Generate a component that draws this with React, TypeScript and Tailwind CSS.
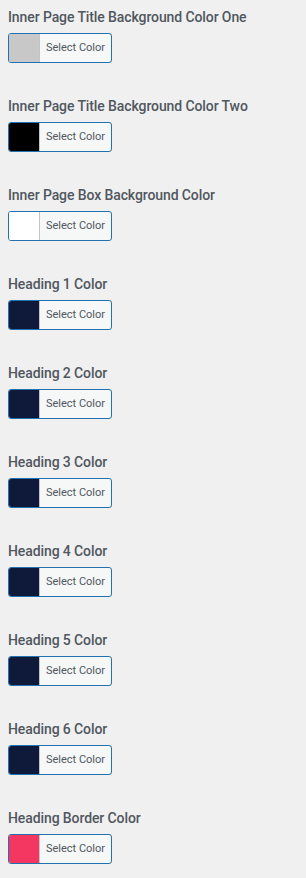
const fields = [
  { label: "Inner Page Title Background Color One", color: "bg-[#c8c8c8]" },
  { label: "Inner Page Title Background Color Two", color: "bg-[#000000]" },
  { label: "Inner Page Box Background Color", color: "bg-[#ffffff]" },
  { label: "Heading 1 Color", color: "bg-[#0f1a3a]" },
  { label: "Heading 2 Color", color: "bg-[#0f1a3a]" },
  { label: "Heading 3 Color", color: "bg-[#0f1a3a]" },
  { label: "Heading 4 Color", color: "bg-[#0f1a3a]" },
  { label: "Heading 5 Color", color: "bg-[#0f1a3a]" },
  { label: "Heading 6 Color", color: "bg-[#0f1a3a]" },
  { label: "Heading Border Color", color: "bg-[#f33760]" },
]

export default function App() {
  return (
    <div className="min-h-screen bg-[#f0f0f1] pl-2 pt-[7px] font-['Roboto',sans-serif]">
      <div className="flex flex-col gap-[33px]">
        {fields.map((f) => (
          <div key={f.label}>
            <h3 className="mb-[6px] text-[14px] leading-5 font-medium tracking-[-0.1px] text-[#50575e]">{f.label}</h3>
            <button className="flex h-[30px] w-[104px] items-stretch overflow-hidden rounded-[3px] border border-[#2271b1] bg-[#f6f7f7] p-0">
              <span className={`w-[31px] border-r border-[#c3c4c7] ${f.color}`} />
              <span className="flex flex-1 items-center justify-center text-[11px] text-[#50575e]">Select Color</span>
            </button>
          </div>
        ))}
      </div>
    </div>
  )
}
